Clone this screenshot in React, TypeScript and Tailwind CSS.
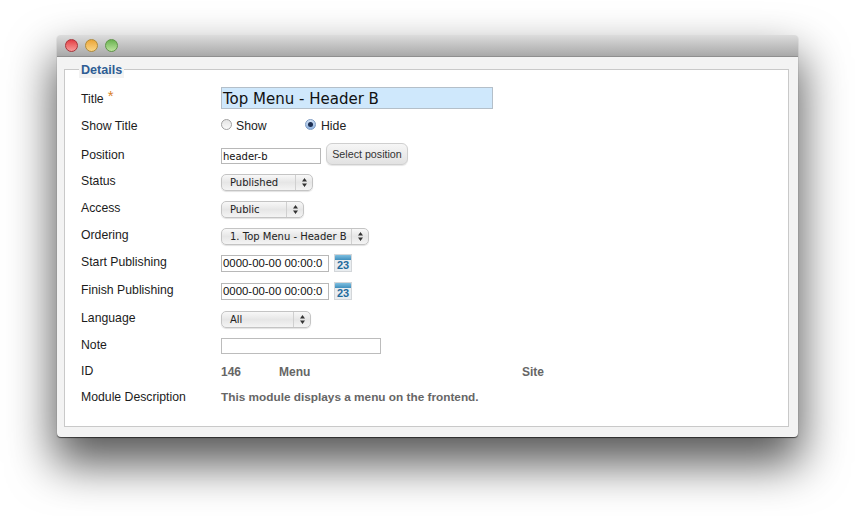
function Row({ h, label, star, children, labelClass = "-translate-y-px" }: { h: string; label: string; star?: boolean; children?: React.ReactNode; labelClass?: string }) {
  return (
    <div className={`flex items-center ${h}`}>
      <div className={`w-[140px] shrink-0 text-[12.25px] text-[#1c1c1c] ${labelClass}`}>
        {label}
        {star && <span className="ml-[4px] inline-block -translate-y-[2px] text-[15px] leading-none text-[#d9822b]">*</span>}
      </div>
      {children}
    </div>
  );
}

function Select({ label, w, text }: { label: string; w: string; text: string }) {
  return (
    <div className={`flex h-[17px] ${w} items-center rounded-[5px] border border-[#c4c4c4] bg-gradient-to-b from-[#f8f8f8] via-[#e6e6e6] to-[#f4f4f4] font-['DejaVu_Sans'] text-[10px] text-[#222] shadow-[0_1px_1px_rgba(0,0,0,0.12)]`}>
      <span className={`min-w-0 flex-1 overflow-hidden whitespace-nowrap ${text}`}>{label}</span>
      <span className="flex h-full w-[17px] shrink-0 items-center justify-center border-l border-[#d0d0d0]">
        <svg width="5" height="9" viewBox="0 0 5 9"><path d="M2.5 0 L5 3.4 H0 Z M2.5 9 L5 5.6 H0 Z" fill="#333" /></svg>
      </span>
    </div>
  );
}

function Calendar() {
  return (
    <div className="ml-[5px] flex h-[18px] w-[18px] flex-col items-center bg-[#d3d6d9] pt-px">
      <div className="h-[5px] w-[16px] rounded-t-[1px] bg-gradient-to-b from-[#7dbfe0] to-[#3f8fbd]" />
      <div className="flex h-[11px] w-[16px] items-center justify-center bg-[#e9edf0] text-[11px] leading-none font-bold text-[#1f6a9c]">23</div>
    </div>
  );
}

function Radio({ on }: { on?: boolean }) {
  return on ? (
    <span className="flex h-[11px] w-[11px] -translate-y-px items-center justify-center rounded-full border border-[#7e9cc4] bg-gradient-to-b from-[#d3e2f5] to-[#8fb3e0]">
      <span className="h-[5px] w-[5px] rounded-full bg-[#1d2f52]" />
    </span>
  ) : (
    <span className="h-[11px] w-[11px] -translate-y-px rounded-full border border-[#a0a0a0] bg-gradient-to-b from-[#e4e4e4] to-[#fafafa]" />
  );
}

const dateCls = "h-[17px] w-[108px] border border-[#b8b8b8] bg-white pl-[1px] text-[11.4px] leading-[15px] whitespace-nowrap text-[#111]";

export default function App() {
  return (
    <div className="h-[516px] w-[855px] overflow-hidden bg-white pt-[35px] pl-[57px] font-['Liberation_Sans',sans-serif]">
      <div className="flex h-[402px] w-[741px] flex-col overflow-hidden rounded-[4px] bg-[#f3f3f3] shadow-[0_24px_46px_3px_rgba(0,0,0,0.66),0_1px_1px_rgba(0,0,0,0.6)]">
        <div className="flex h-[22px] shrink-0 items-center gap-[7px] border-b border-[#8f8f8f] bg-gradient-to-b from-[#dcdcdc] to-[#a9a9a9] pl-[8px]">
          <span className="h-[13px] w-[13px] rounded-full border border-[#a8343a] bg-gradient-to-b from-[#e23a44] to-[#f79a9a]" />
          <span className="h-[13px] w-[13px] rounded-full border border-[#b08a38] bg-gradient-to-b from-[#eba535] to-[#fad684]" />
          <span className="h-[13px] w-[13px] rounded-full border border-[#5f9447] bg-gradient-to-b from-[#68b24f] to-[#bde49e]" />
        </div>
        <div className="relative mx-[7px] mt-[12px] h-[358px] w-[725px] border border-[#c9c9c9] bg-white pt-[17px] pl-[16px]">
          <div className="absolute top-[-7px] left-[14px] bg-[#f3f3f3] px-[2px] text-[12.6px] leading-[15px] font-bold text-[#2f5d94]">Details</div>
          <Row h="h-[22px]" label="Title" star labelClass="translate-y-px">
            <div className="h-[22px] w-[272px] border border-[#b4bfc9] bg-[#cfe8fc] pl-[1px] font-['DejaVu_Sans'] text-[15px] leading-[22px] text-[#111]">Top Menu - Header B</div>
          </Row>
          <Row h="h-[32px]" label="Show Title" labelClass="translate-y-px">
            <div className="flex items-center text-[12.25px] text-[#222]">
              <Radio />
              <span className="ml-[4px] w-[69px] translate-y-px">Show</span>
              <Radio on />
              <span className="ml-[5px] translate-y-px">Hide</span>
            </div>
          </Row>
          <Row h="h-[28px]" label="Position" labelClass="">
            <div className="h-[16px] w-[100px] translate-y-px border border-[#b8b8b8] bg-white pl-[1px] font-['DejaVu_Sans'] text-[10px] leading-[16px] text-[#111]">header-b</div>
            <div className="ml-[5px] flex h-[22px] w-[82px] -translate-y-px items-center justify-center rounded-[6px] border border-[#cfcfcf] bg-gradient-to-b from-[#f6f6f6] to-[#e2e2e2] pt-px text-[10.7px] text-[#333] shadow-[0_1px_1px_rgba(0,0,0,0.1)]">Select position</div>
          </Row>
          <Row h="h-[26px]" label="Status"><Select label="Published" w="w-[92px]" text="pl-[8px]" /></Row>
          <Row h="h-[28px]" label="Access"><Select label="Public" w="w-[83px]" text="pl-[8px]" /></Row>
          <Row h="h-[26px]" label="Ordering"><Select label="1. Top Menu - Header B" w="w-[148px]" text="pl-[8px]" /></Row>
          <Row h="h-[28px]" label="Start Publishing">
            <div className={dateCls}>0000-00-00 00:00:0</div>
            <Calendar />
          </Row>
          <Row h="h-[28px]" label="Finish Publishing">
            <div className={dateCls}>0000-00-00 00:00:0</div>
            <Calendar />
          </Row>
          <Row h="h-[28px]" label="Language"><Select label="All" w="w-[90px]" text="pl-[8px]" /></Row>
          <Row h="h-[26px]" label="Note">
            <div className="h-[16px] w-[160px] border border-[#bcbcbc] bg-white" />
          </Row>
          <Row h="h-[26px]" label="ID">
            <div className="flex text-[12px] font-bold text-[#666]">
              <span className="w-[58px]">146</span>
              <span className="w-[243px]">Menu</span>
              <span>Site</span>
            </div>
          </Row>
          <Row h="h-[24px]" label="Module Description" labelClass="">
            <div className="translate-y-px text-[11.8px] font-bold text-[#666]">This module displays a menu on the frontend.</div>
          </Row>
        </div>
      </div>
    </div>
  );
}
